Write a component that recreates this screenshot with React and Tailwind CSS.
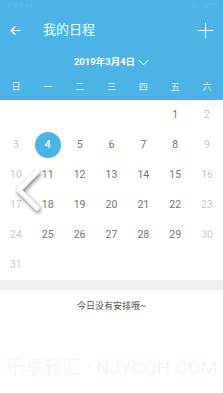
import React from "react";

const weekDays = ["日", "一", "二", "三", "四", "五", "六"];

// March 2019 starts on Friday
const cells = [
  null, null, null, null, null, 1, 2,
  3, 4, 5, 6, 7, 8, 9,
  10, 11, 12, 13, 14, 15, 16,
  17, 18, 19, 20, 21, 22, 23,
  24, 25, 26, 27, 28, 29, 30,
  31, null, null, null, null, null, null,
];

const DayCell = ({ day, col }) => {
  if (!day) return <div className="h-[30px]" />;
  const weekend = col === 0 || col === 6;
  if (day === 4) {
    return (
      <div className="h-[30px] flex items-center justify-center">
        <div className="w-[26px] h-[26px] rounded-full bg-[#4bb3e6] text-white flex items-center justify-center text-[10.5px] font-medium">
          {day}
        </div>
      </div>
    );
  }
  return (
    <div
      className={
        weekend
          ? "h-[30px] flex items-center justify-center text-[10.5px] text-[#c8c8c8]"
          : "h-[30px] flex items-center justify-center text-[10.5px] text-[#757575]"
      }
    >
      {day}
    </div>
  );
};

const App = () => {
  return (
    <div
      className="relative w-[223px] h-[393px] bg-white overflow-hidden"
      style={{ fontFamily: "Roboto, 'Noto Sans CJK SC', sans-serif" }}
    >
      {/* Header */}
      <div className="bg-[#4bb3e6] h-[100px] flex flex-col">
        <div className="h-[12px] flex justify-between items-center px-[5px] text-[7px] text-white/15">
          <span>下午1:44</span>
          <span>4G 100%</span>
        </div>
        <div className="h-[36px] flex items-center pl-[9px] pr-[9px]">
          <svg width="13" height="13" viewBox="0 0 24 24" fill="none" stroke="white" strokeWidth="2.2" strokeLinecap="round" strokeLinejoin="round">
            <path d="M20 12H4M11 5l-7 7 7 7" />
          </svg>
          <span className="ml-[21px] text-[13px] text-white">我的日程</span>
          <svg className="ml-auto" width="17" height="17" viewBox="0 0 24 24" fill="none" stroke="white" strokeWidth="1.6">
            <path d="M12 1v22M1 12h22" />
          </svg>
        </div>
        <div className="h-[28px] flex items-center justify-center gap-[3px] text-white">
          <span className="text-[9.5px] font-bold">2019年3月4日</span>
          <svg width="11" height="7" viewBox="0 0 11 7" fill="none" stroke="white" strokeWidth="1">
            <path d="M0.5 0.8l5 5 5-5" />
          </svg>
        </div>
        <div className="h-[24px] grid grid-cols-7 items-center text-[9px] text-white/80">
          {weekDays.map((d) => (
            <div key={d} className="text-center">{d}</div>
          ))}
        </div>
      </div>

      {/* Calendar grid */}
      <div className="grid grid-cols-7">
        {cells.map((day, i) => (
          <DayCell key={i} day={day} col={i % 7} />
        ))}
      </div>

      <div className="h-[10px] bg-[#efefef]" />

      <div className="pt-[10px] text-center text-[9px] text-[#555]">今日没有安排哦~</div>

      {/* Swipe hint chevron */}
      <svg className="absolute left-[10px] top-[166px] drop-shadow-[1px_2px_2px_rgba(0,0,0,0.55)]" width="36" height="50" viewBox="0 0 36 50" fill="none">
        <path d="M27 6L9 24l18 18" stroke="white" strokeWidth="5" strokeLinecap="round" strokeLinejoin="round" />
      </svg>

      {/* Watermark */}
      <div className="absolute left-0 top-[358px] w-[223px] text-center whitespace-nowrap text-[19px] text-[#fdeffa] leading-none">
        乐享轻汇 · NJYCQH.COM
      </div>
    </div>
  );
};

export default App;
